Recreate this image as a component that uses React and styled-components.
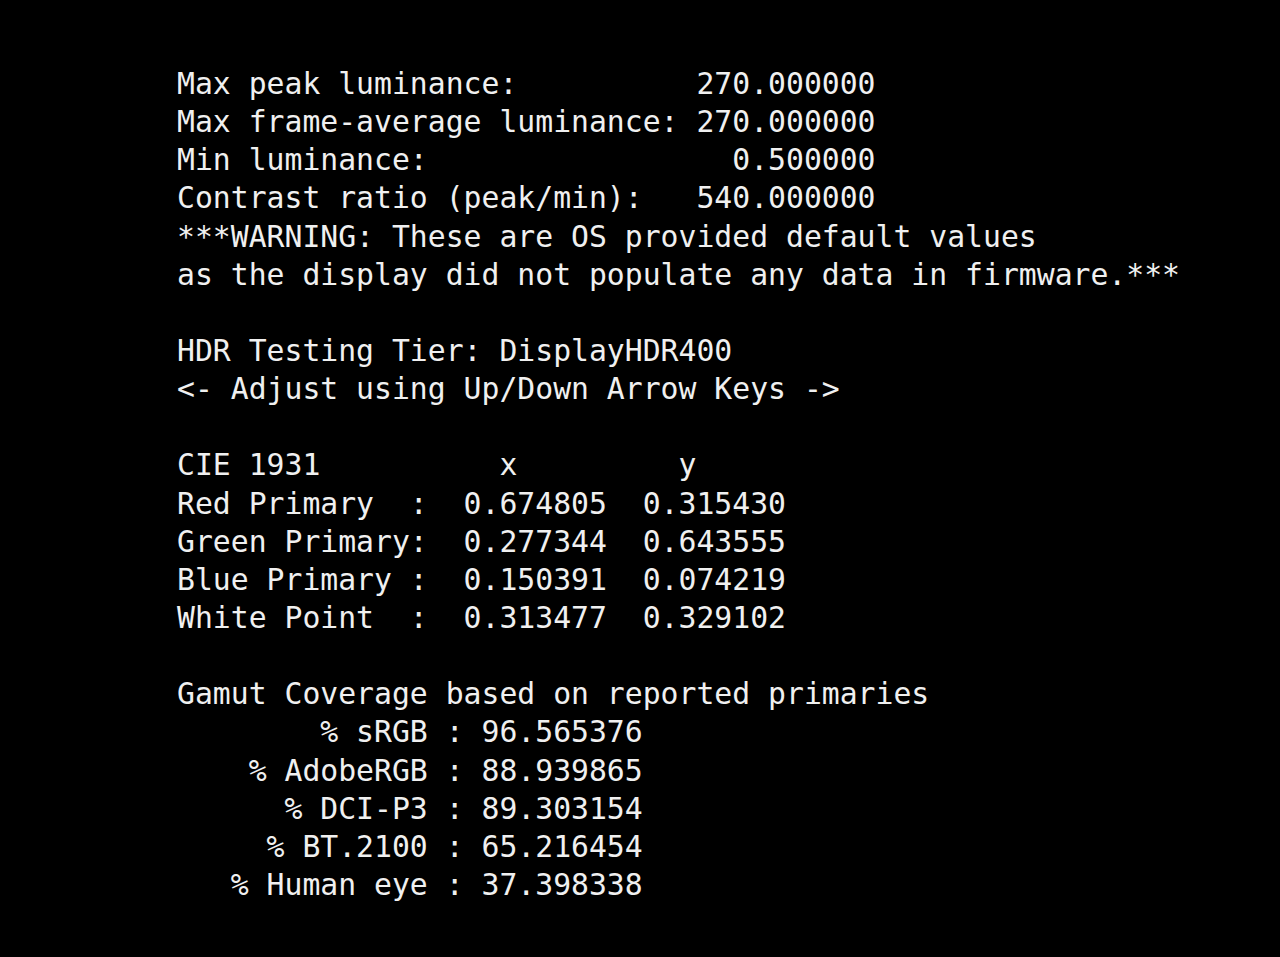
import React from "react";
import styled, { createGlobalStyle } from "styled-components";

const Global = createGlobalStyle`
  html, body { margin: 0; padding: 0; background: #000; }
  body { min-height: 957px; }
`;

const Screen = styled.main`
  width: 1280px;
  min-height: 957px;
  background: #000;
  box-sizing: border-box;
  padding: 65px 0 0 177px;
`;

const Console = styled.div`
  display: flex;
  flex-direction: column;
  font-family: "DejaVu Sans Mono", "Liberation Mono", monospace;
  font-size: 29.75px;
  line-height: 38.15px;
  color: #f0f0f0;
`;

const Line = styled.div`
  white-space: pre;
  height: 38.15px;
`;

const lines = [
  "Max peak luminance:          270.000000",
  "Max frame-average luminance: 270.000000",
  "Min luminance:                 0.500000",
  "Contrast ratio (peak/min):   540.000000",
  "***WARNING: These are OS provided default values",
  "as the display did not populate any data in firmware.***",
  "",
  "HDR Testing Tier: DisplayHDR400",
  "<- Adjust using Up/Down Arrow Keys ->",
  "",
  "CIE 1931          x         y",
  "Red Primary  :  0.674805  0.315430",
  "Green Primary:  0.277344  0.643555",
  "Blue Primary :  0.150391  0.074219",
  "White Point  :  0.313477  0.329102",
  "",
  "Gamut Coverage based on reported primaries",
  "        % sRGB : 96.565376",
  "    % AdobeRGB : 88.939865",
  "      % DCI-P3 : 89.303154",
  "     % BT.2100 : 65.216454",
  "   % Human eye : 37.398338",
];

export default function App() {
  return (
    <>
      <Global />
      <Screen>
        <Console>
          {lines.map((l, i) => (
            <Line key={i}>{l}</Line>
          ))}
        </Console>
      </Screen>
    </>
  );
}
